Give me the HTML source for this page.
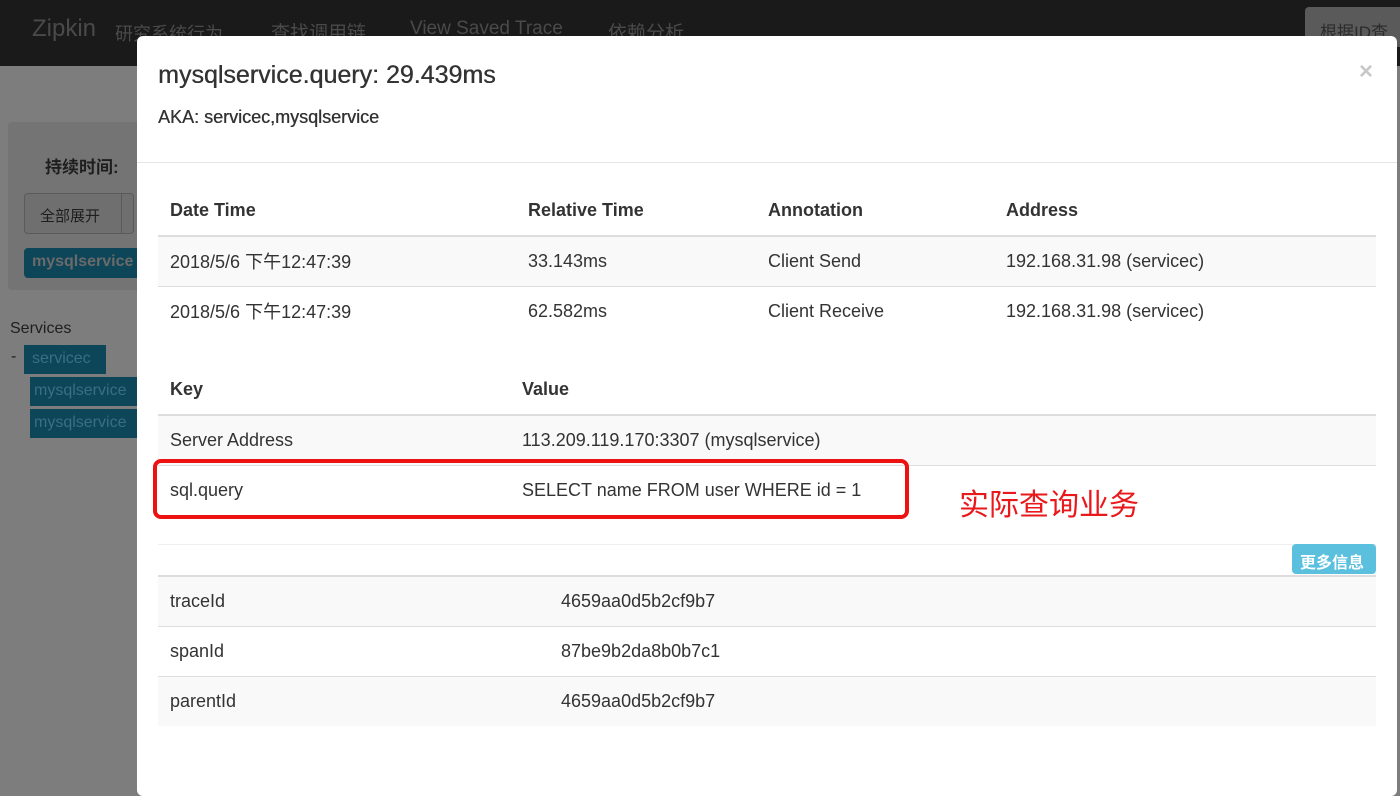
<!DOCTYPE html>
<html><head><meta charset="utf-8"><style>
*{margin:0;padding:0;box-sizing:border-box}
body{width:1400px;height:773px;overflow:hidden;background:#7d7d7d;font-family:"Liberation Sans","Noto Sans CJK SC",sans-serif;position:relative;color:#333}
.nav{position:absolute;left:0;top:0;width:1400px;height:66px;background:#1a1a1a}
.nav span{position:absolute;top:18px;color:#4a4a4a;font-size:19px}
.a{position:absolute}
.modal{position:absolute;left:137px;top:36px;width:1260px;height:760px;background:#fff;border-radius:6px}
table{border-collapse:collapse;position:absolute;left:21px;width:1218px;font-size:18px}
td,th{text-align:left;padding:0 12px;height:50px;vertical-align:middle}
th{font-weight:bold;border-bottom:2px solid #ddd}
td{border-top:1px solid #ddd}
tr.s td{background:#f9f9f9}
</style></head><body>
<div class="nav">
<span style="left:32px;font-size:24px;top:15px">Zipkin</span>
<span style="left:115px;font-size:18px;top:20px">研究系统行为</span>
<span style="left:271px">查找调用链</span>
<span style="left:410px">View Saved Trace</span>
<span style="left:608px">依赖分析</span>
</div>
<div class="a" style="left:1305px;top:7px;width:95px;height:40px;background:#5a5a5a;border-radius:4px 0 0 0;color:#2c2c2c;font-size:17px;padding:11px 0 0 15px">根据ID查找</div>
<div class="a" style="left:8px;top:122px;width:140px;height:168px;background:#747474;border-radius:4px"></div>
<div class="a" style="left:45px;top:153px;font-size:17px;font-weight:bold;color:#1e1e1e">持续时间:</div>
<div class="a" style="left:24px;top:193px;width:110px;height:41px;background:#6f6f6f;border:1px solid #5a5a5a;border-radius:4px;font-size:15px;color:#1e1e1e;padding:11px 0 0 15px">全部展开</div>
<div class="a" style="left:121px;top:193px;width:1px;height:41px;background:#5a5a5a"></div>
<div class="a" style="left:24px;top:248px;width:120px;height:30px;background:#0d4559;border-radius:4px;color:#6a6a6a;font-size:16px;font-weight:bold;padding:5px 0 0 8px">mysqlservice</div>
<div class="a" style="left:10px;top:320px;font-size:16px;color:#1e1e1e">Services</div>
<div class="a" style="left:11px;top:348px;font-size:16px;color:#1e1e1e">-</div>
<div class="a" style="left:24px;top:345px;width:82px;height:29px;background:#0d4559;color:#3a6f80;font-size:16px;padding:5px 0 0 8px">servicec</div>
<div class="a" style="left:30px;top:377px;width:110px;height:29px;background:#0d4559;color:#3a6f80;font-size:16px;padding:5px 0 0 4px">mysqlservice</div>
<div class="a" style="left:30px;top:409px;width:110px;height:29px;background:#0d4559;color:#3a6f80;font-size:16px;padding:5px 0 0 4px">mysqlservice</div>

<div class="modal">
<div class="a" style="left:21px;top:25px;font-size:25px;color:#333;text-shadow:0.4px 0 0 #333">mysqlservice.query: 29.439ms</div>
<div class="a" style="left:21px;top:71px;font-size:18px;color:#333;text-shadow:0.3px 0 0 #333">AKA: servicec,mysqlservice</div>
<div class="a" style="left:1222px;top:22px;font-size:24px;color:#c8c8c8;font-weight:bold">×</div>
<div class="a" style="left:0;top:126px;width:1260px;height:1px;background:#e5e5e5"></div>
<table style="top:150px">
<tr><th style="width:358px">Date Time</th><th style="width:240px">Relative Time</th><th style="width:238px">Annotation</th><th>Address</th></tr>
<tr class="s"><td>2018/5/6 下午12:47:39</td><td>33.143ms</td><td>Client Send</td><td>192.168.31.98 (servicec)</td></tr>
<tr><td>2018/5/6 下午12:47:39</td><td>62.582ms</td><td>Client Receive</td><td>192.168.31.98 (servicec)</td></tr>
</table>
<table style="top:329px">
<tr><th style="width:352px">Key</th><th>Value</th></tr>
<tr class="s"><td>Server Address</td><td>113.209.119.170:3307 (mysqlservice)</td></tr>
<tr><td>sql.query</td><td>SELECT name FROM user WHERE id = 1</td></tr>
</table>
<div class="a" style="left:21px;top:508px;width:1218px;height:1px;background:#eee"></div>
<div class="a" style="left:1155px;top:508px;width:84px;height:30px;background:#5bc0de;border-radius:4px;color:#fff;font-size:16px;font-weight:bold;padding:5px 0 0 8px">更多信息</div>
<table style="top:539px">
<tr class="s"><td style="width:391px;border-top:2px solid #ddd">traceId</td><td style="border-top:2px solid #ddd">4659aa0d5b2cf9b7</td></tr>
<tr><td>spanId</td><td>87be9b2da8b0b7c1</td></tr>
<tr class="s"><td>parentId</td><td>4659aa0d5b2cf9b7</td></tr>
</table>
<div class="a" style="left:16px;top:423px;width:756px;height:60px;border:4px solid #ee1111;border-radius:8px"></div>
<div class="a" style="left:822px;top:444px;font-size:30px;color:#e8181b">实际查询业务</div>
</div>
</body></html>
